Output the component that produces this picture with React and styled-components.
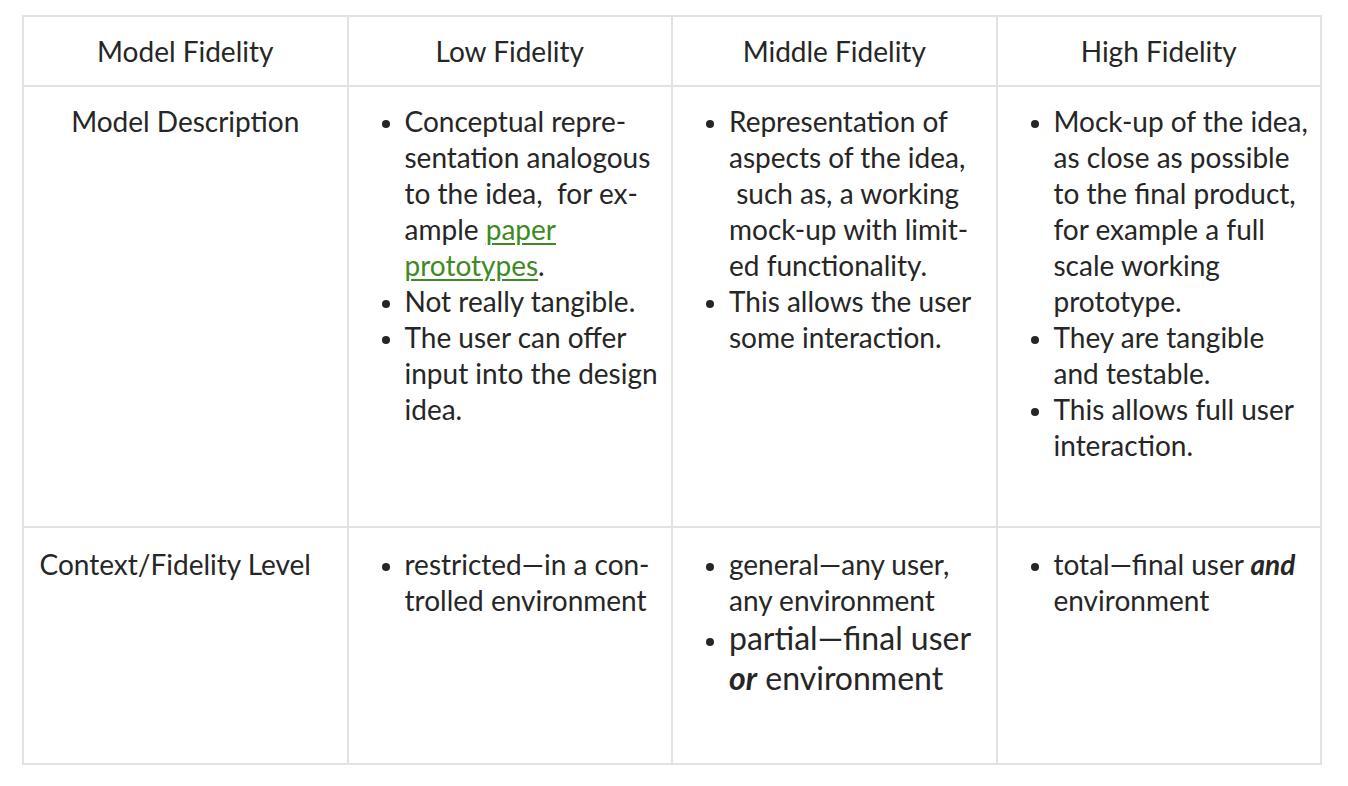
import React from 'react'
import styled, { createGlobalStyle } from 'styled-components'

const GlobalStyle = createGlobalStyle`
  html, body {
    margin: 0;
    padding: 0;
    background: #fff;
  }
  body {
    font-family: Lato, "Open Sans", sans-serif;
    color: #262626;
  }
`

const Page = styled.div`
  padding: 15px 0 0 22px;
`

const Table = styled.table`
  width: 1300px;
  border-collapse: collapse;
  table-layout: fixed;
  font-size: 28px;
  line-height: 36px;
`

const Row = styled.tr`
  height: ${(p) => p.$height}px;
`

const Head = styled.th`
  border: 2px solid #e2e2e2;
  font-weight: 400;
  padding: 16px 16px;
  text-align: center;
  vertical-align: middle;
`

const Cell = styled.td`
  border: 2px solid #e2e2e2;
  padding: ${(p) => p.$pad || '16px 12px 17px 18px'};
  vertical-align: top;
  text-align: ${(p) => (p.$center ? 'center' : 'left')};
`

const List = styled.ul`
  margin: 0;
  padding-left: 38px;
  list-style: disc;
`

const Item = styled.li`
  font-size: ${(p) => (p.$big ? 32 : 28)}px;
  line-height: ${(p) => (p.$big ? 40 : 36)}px;
  &::marker {
    font-size: 24px;
  }
`

const Link = styled.a`
  color: #3d8b22;
  text-decoration: underline;
  text-underline-offset: 3px;
  text-decoration-thickness: 2px;
`

const Strong = styled.em`
  font-weight: 700;
  font-style: italic;
`

const heads = ['Model Fidelity', 'Low Fidelity', 'Middle Fidelity', 'High Fidelity']

export default function App() {
  return (
    <Page>
      <GlobalStyle />
      <Table>
        <thead>
          <Row $height={70}>
            {heads.map((h) => (
              <Head key={h}>{h}</Head>
            ))}
          </Row>
        </thead>
        <tbody>
          <Row $height={441}>
            <Cell $center $pad="16px 16px">Model Description</Cell>
            <Cell>
              <List>
                <Item>
                  Conceptual repre{'\u00AD'}sentation analogous to the idea,{'\u00A0'} for ex{'\u00AD'}ample{' '}
                  <Link href="#">paper prototypes</Link>.
                </Item>
                <Item>Not really tangible.</Item>
                <Item>The user can offer input into the design idea.</Item>
              </List>
            </Cell>
            <Cell>
              <List>
                <Item>
                  Representation of aspects of the idea, {'\u00A0'}such as, a working mock-up with limit{'\u00AD'}ed functionality.
                </Item>
                <Item>This allows the user some interaction.</Item>
              </List>
            </Cell>
            <Cell>
              <List>
                <Item>
                  Mock-up of the idea, as close as possible to the final product, for example a full scale working prototype.
                </Item>
                <Item>They are tangible and testable.</Item>
                <Item>This allows full user interaction.</Item>
              </List>
            </Cell>
          </Row>
          <Row $height={237}>
            <Cell $center $pad="18px 34px 17px 14px">Context/Fidelity Level</Cell>
            <Cell $pad="18px 12px 17px 18px">
              <List>
                <Item>restricted—in a con{'\u00AD'}trolled environment</Item>
              </List>
            </Cell>
            <Cell $pad="18px 12px 17px 18px">
              <List>
                <Item>general—any user, any environment</Item>
                <Item $big>
                  partial—final user <Strong>or</Strong> environment
                </Item>
              </List>
            </Cell>
            <Cell $pad="18px 12px 17px 18px">
              <List>
                <Item>
                  total—final user <Strong>and</Strong> environment
                </Item>
              </List>
            </Cell>
          </Row>
        </tbody>
      </Table>
    </Page>
  )
}
